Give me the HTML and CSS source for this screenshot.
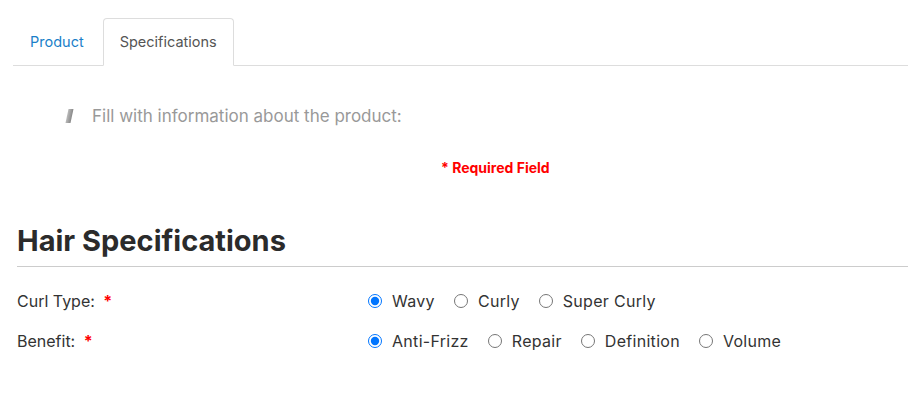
FILE: index.html
```html
<!DOCTYPE html>
<html lang="en">
<head>
<meta charset="utf-8">
<title>Specifications</title>
<link rel="stylesheet" href="styles.css">
</head>
<body>
<div class="page">
  <ul class="tabs">
    <li class="tab"><a href="#">Product</a></li>
    <li class="tab active"><a href="#">Specifications</a></li>
  </ul>
  <div class="intro">
    <span class="intro-icon"></span>
    <span class="intro-text">Fill with information about the product:</span>
  </div>
  <p class="required"><span>*</span> Required Field</p>
  <h2 class="section-title">Hair Specifications</h2>
  <form class="spec-form">
    <div class="row">
      <div class="label">Curl Type: <span class="star">*</span></div>
      <div class="options">
        <label class="opt"><input type="radio" name="curl" checked> Wavy</label>
        <label class="opt"><input type="radio" name="curl"> Curly</label>
        <label class="opt"><input type="radio" name="curl"> Super Curly</label>
      </div>
    </div>
    <div class="row">
      <div class="label">Benefit: <span class="star">*</span></div>
      <div class="options">
        <label class="opt"><input type="radio" name="benefit" checked> Anti-Frizz</label>
        <label class="opt"><input type="radio" name="benefit"> Repair</label>
        <label class="opt"><input type="radio" name="benefit"> Definition</label>
        <label class="opt"><input type="radio" name="benefit"> Volume</label>
      </div>
    </div>
  </form>
</div>
</body>
</html>
```
FILE: styles.css
```css
* { box-sizing: border-box; }
body {
  margin: 0;
  background: #fff;
  font-family: Inter, "Noto Sans", sans-serif;
  color: #333;
}
.page {
  padding-top: 18px;
}
.tabs {
  list-style: none;
  margin: 0 0 0 13px;
  padding: 0;
  display: flex;
  border-bottom: 1px solid #ddd;
}
.tab {
  margin-right: 2px;
  margin-bottom: -1px;
}
.tab a {
  display: block;
  height: 48px;
  line-height: 46px;
  padding: 0 16px;
  font-size: 14.5px;
  text-decoration: none;
  color: #1a7fc9;
  border: 1px solid transparent;
  border-radius: 4px 4px 0 0;
}
.tab.active a {
  color: #555;
  background: #fff;
  border-color: #ddd #ddd #fff;
}
.intro {
  display: flex;
  align-items: center;
  margin: 37px 0 0 67px;
  height: 26px;
}
.intro-icon {
  width: 5px;
  height: 14px;
  background: linear-gradient(90deg, #bbb, #888);
  transform: skewX(-12deg);
  margin-right: 20px;
}
.intro-text {
  font-size: 17px;
  color: #999;
}
.required {
  margin: 30px 0 0 441px;
  font-size: 14px;
  font-weight: 700;
  color: #f00;
}
.section-title {
  margin: 47px 0 0 17px;
  padding-bottom: 8px;
  font-size: 29px;
  font-weight: 700;
  color: #2b2b2b;
  border-bottom: 1px solid #ccc;
}
.spec-form {
  margin: 24px 0 0 17px;
}
.row {
  display: grid;
  grid-template-columns: 351px 1fr;
  height: 40px;
  align-items: start;
}
.label {
  font-size: 16px;
  line-height: 20px;
  color: #333;
}
.star {
  color: #f00;
  font-weight: 700;
  margin-left: 4px;
}
.options {
  display: flex;
  gap: 19px;
}
.opt {
  display: flex;
  align-items: center;
  font-size: 16px;
  line-height: 20px;
  letter-spacing: 0.3px;
  color: #333;
}
.opt input {
  margin: 0 10px 0 0;
  width: 14px;
  height: 14px;
}
```
